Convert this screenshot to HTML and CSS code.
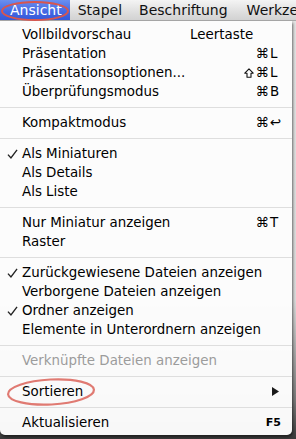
FILE: index.html
```html
<!DOCTYPE html>
<html lang="de">
<head>
<meta charset="utf-8">
<link rel="stylesheet" href="styles.css">
</head>
<body>
<div class="screen">
  <div class="menubar">
    <span class="mb-item active">Ansicht</span>
    <span class="mb-item mb-stapel">Stapel</span>
    <span class="mb-item mb-besch">Beschriftung</span>
    <span class="mb-item mb-werk">Werkzeuge</span>
  </div>
  <div class="menu">
    <div class="item"><span class="label">Vollbildvorschau</span><span class="key-text">Leertaste</span></div>
    <div class="item"><span class="label">Präsentation</span><span class="sc"><span class="mod">⌘</span><span class="k">L</span></span></div>
    <div class="item"><span class="label">Präsentationsoptionen...</span><span class="sc"><svg class="shift" viewBox="0 0 10 10"><path d="M5 0.8 L9.2 5.2 L7 5.2 L7 9.2 L3 9.2 L3 5.2 L0.8 5.2 Z"/></svg><span class="mod">⌘</span><span class="k">L</span></span></div>
    <div class="item"><span class="label">Überprüfungsmodus</span><span class="sc"><span class="mod">⌘</span><span class="k">B</span></span></div>
    <div class="sep"></div>
    <div class="item"><span class="label">Kompaktmodus</span><span class="sc"><span class="mod">⌘</span><span class="k">↩</span></span></div>
    <div class="sep"></div>
    <div class="item"><svg class="check" viewBox="0 0 12 11"><path d="M1 6.2 L4.3 9.8 L11 1"/></svg><span class="label">Als Miniaturen</span></div>
    <div class="item"><span class="label">Als Details</span></div>
    <div class="item"><span class="label">Als Liste</span></div>
    <div class="sep"></div>
    <div class="item"><span class="label">Nur Miniatur anzeigen</span><span class="sc"><span class="mod">⌘</span><span class="k">T</span></span></div>
    <div class="item"><span class="label">Raster</span></div>
    <div class="sep"></div>
    <div class="item"><svg class="check" viewBox="0 0 12 11"><path d="M1 6.2 L4.3 9.8 L11 1"/></svg><span class="label">Zurückgewiesene Dateien anzeigen</span></div>
    <div class="item"><span class="label">Verborgene Dateien anzeigen</span></div>
    <div class="item"><svg class="check" viewBox="0 0 12 11"><path d="M1 6.2 L4.3 9.8 L11 1"/></svg><span class="label">Ordner anzeigen</span></div>
    <div class="item"><span class="label">Elemente in Unterordnern anzeigen</span></div>
    <div class="sep"></div>
    <div class="item disabled"><span class="label">Verknüpfte Dateien anzeigen</span></div>
    <div class="sep"></div>
    <div class="item"><span class="label">Sortieren</span><svg class="arrow" viewBox="0 0 7 9"><path d="M0 0 L7 4.5 L0 9 Z"/></svg></div>
    <div class="sep"></div>
    <div class="item"><span class="label">Aktualisieren</span><span class="fkey">F5</span></div>
  </div>
  <svg class="ring ring-top" viewBox="0 0 70 22"><ellipse cx="35" cy="11" rx="33" ry="9"/></svg>
  <svg class="ring ring-sort" viewBox="0 0 92 32"><ellipse cx="46" cy="16" rx="43" ry="12.5" transform="rotate(-3 46 16)"/></svg>
</div>
</body>
</html>
```
FILE: styles.css
```css
html, body {
  margin: 0;
  padding: 0;
}
body {
  width: 296px;
  height: 439px;
  overflow: hidden;
  background: linear-gradient(to bottom, #e4e4e4 0, #dcdcdc 300px, #7a7a7a 400px, #3a3a3a 439px);
  font-family: "DejaVu Sans", "Liberation Sans", sans-serif;
}
.screen {
  position: relative;
  width: 296px;
  height: 439px;
  overflow: hidden;
}
.menubar {
  display: flex;
  align-items: center;
  height: 21px;
  background: linear-gradient(to bottom, #f4f4f4 0%, #e2e2e2 50%, #d2d2d2 100%);
  border-bottom: 1px solid #a9a9a9;
  box-sizing: border-box;
  font-size: 14px;
  color: #111;
  white-space: nowrap;
  overflow: hidden;
}
.mb-item {
  line-height: 21px;
  height: 21px;
  flex-shrink: 0;
}
.mb-item.active {
  padding: 0 8px 0 10px;
  color: #fff;
  background: linear-gradient(to bottom, #6a8ff0 0%, #4468e4 55%, #3457d8 100%);
}
.mb-stapel { padding: 0 9px 0 8px; }
.mb-besch { padding: 0 11px 0 8px; }
.mb-werk { padding: 0 0 0 8px; }

.menu {
  width: 292px;
  box-sizing: border-box;
  padding: 4px 0 3px;
  background: rgba(252, 252, 252, 0.98);
  border-radius: 0 0 5px 5px;
  box-shadow: 1px 2px 3px rgba(0, 0, 0, 0.55);
  font-size: 13.4px;
  color: #000;
}
.item {
  position: relative;
  display: flex;
  align-items: center;
  height: 19px;
  padding: 0 12px 0 22px;
  white-space: nowrap;
}
.item.disabled {
  color: #9c9c9c;
}
.label {
  flex: 1;
}
.key-text {
  position: absolute;
  left: 190px;
}
.sc {
  display: flex;
  align-items: center;
  width: 40px;
  justify-content: flex-end;
}
.shift {
  width: 10px;
  height: 10px;
  margin-right: 2px;
  fill: none;
  stroke: #111;
  stroke-width: 1.1;
  stroke-linejoin: round;
}
.mod {
  text-align: right;
}
.k {
  width: 10px;
  text-align: left;
  padding-left: 1px;
}
.fkey {
  font-size: 11px;
  font-weight: bold;
  margin-right: -1px;
}
.check {
  position: absolute;
  left: 7px;
  top: 5px;
  width: 11px;
  height: 10px;
  fill: none;
  stroke: #222;
  stroke-width: 1.5;
}
.arrow {
  width: 7px;
  height: 9px;
  fill: #1a1a1a;
  margin-right: 1px;
}
.sep {
  height: 1px;
  margin: 6px 0 5px;
  background: #dedede;
}
.ring {
  position: absolute;
  fill: none;
  stroke: #d7564f;
  stroke-width: 2;
}
.ring-top {
  left: 0;
  top: 0;
  width: 70px;
  height: 22px;
}
.ring-sort {
  left: 5px;
  top: 376px;
  width: 92px;
  height: 32px;
  stroke: #e07a72;
  stroke-width: 2.2;
}
```
